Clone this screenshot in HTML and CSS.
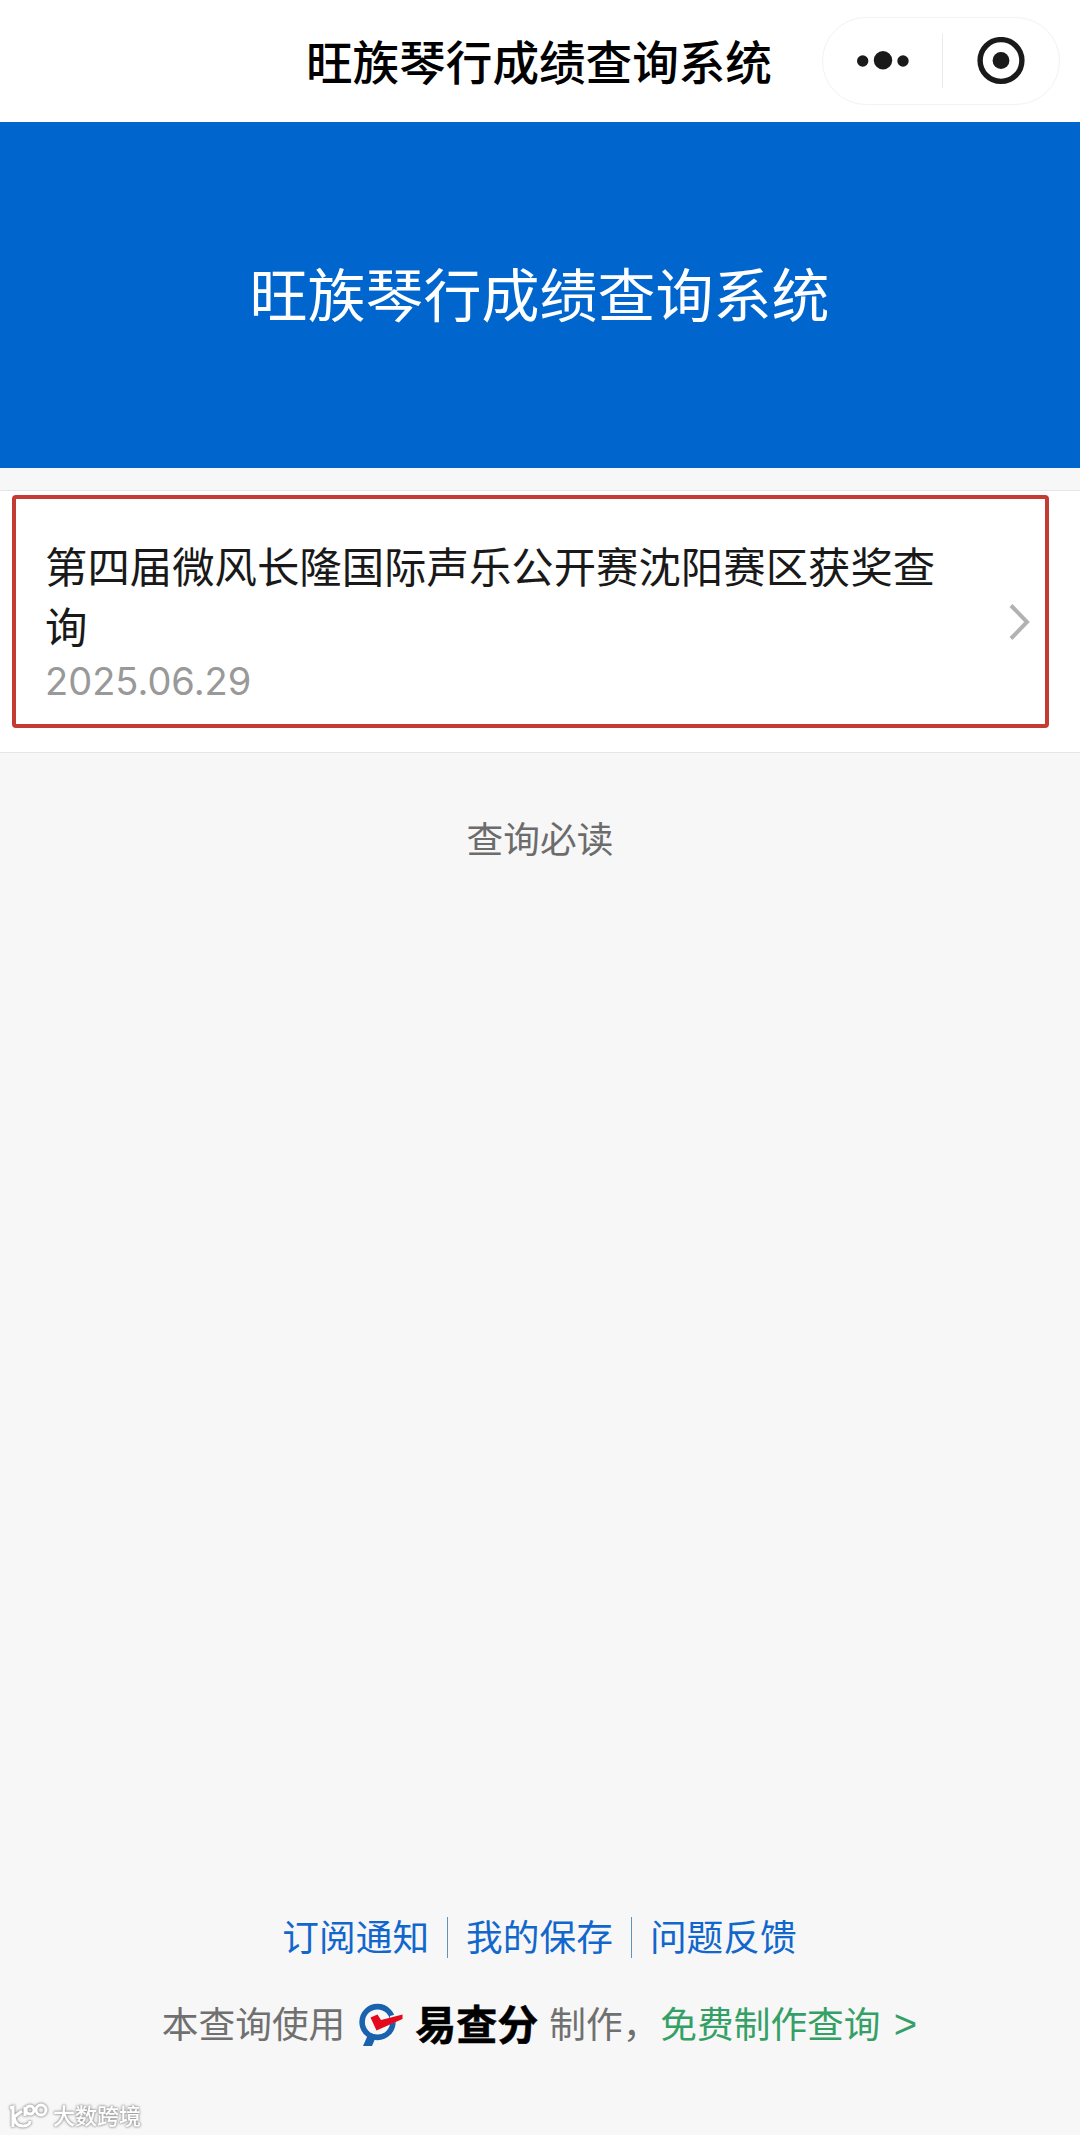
FILE: index.html
```html
<!DOCTYPE html>
<html lang="zh-CN">
<head>
    <meta charset="UTF-8">
    <meta name="viewport" content="width=device-width, initial-scale=1.0">
    <title>旺族琴行成绩查询系统</title>
    <link rel="stylesheet" href="styles.css">
</head>
<body>
    <header class="navbar">
        <h1>旺族琴行成绩查询系统</h1>
        <div class="capsule">
            <svg class="more" width="52" height="20" viewBox="0 0 52 20" fill="#1a1a1a">
                <circle cx="5.7" cy="10" r="5.7"/>
                <circle cx="26" cy="9.2" r="9.2"/>
                <circle cx="46" cy="10" r="5.7"/>
            </svg>
            <span class="capsule-line"></span>
            <svg class="close" width="48" height="48" viewBox="0 0 48 48">
                <circle cx="24" cy="23.5" r="20.9" fill="none" stroke="#1a1a1a" stroke-width="5.4"/>
                <circle cx="24" cy="23.5" r="8.4" fill="#1a1a1a"/>
            </svg>
        </div>
    </header>

    <div class="banner">旺族琴行成绩查询系统</div>

    <div class="list">
        <a class="item">
            <div class="item-text">
                <div class="item-title">第四届微风长隆国际声乐公开赛沈阳赛区获奖查询</div>
                <div class="item-date">2025.06.29</div>
            </div>
            <svg class="arrow" width="22" height="38" viewBox="0 0 22 38">
                <path d="M2 2.5L18 19L2 35.5" fill="none" stroke="#b2b2b2" stroke-width="4"/>
            </svg>
        </a>
    </div>

    <div class="notice">查询必读</div>

    <footer class="footer">
        <nav class="links">
            <a>订阅通知</a>
            <a>我的保存</a>
            <a>问题反馈</a>
        </nav>
        <div class="powered">
            <span>本查询使用</span>
            <svg class="logo" width="44" height="44" viewBox="0 0 44 44">
                <path d="M7 30L16 36L13 43L4 43L8 34Z" fill="#1b62ae"/>
                <circle cx="18.5" cy="19" r="15.4" fill="none" stroke="#1b62ae" stroke-width="5.6"/>
                <path d="M31 13L45 9V16L31 21Z" fill="#f7f7f7"/>
                <path d="M11.5 14.5L18.5 11.5L22 17L43.5 11.5V16L17.5 27.5Z" fill="#e20a1c"/>
            </svg>
            <b class="brand">易查分</b>
            <span>制作，</span>
            <a class="make">免费制作查询 <span class="gt">&gt;</span></a>
        </div>
    </footer>

    <div class="watermark">
        <svg width="40" height="27" viewBox="0 0 40 27" fill="none" stroke="#fff" stroke-width="3">
            <path d="M2 5l3-1v20M14 8L6 14c1 7 5 9 9 9s7-2 7-5"/>
            <circle cx="22" cy="7" r="4"/>
            <circle cx="33" cy="7" r="5"/>
            <path d="M17 4v9"/>
        </svg>
        <span>大数跨境</span>
    </div>
</body>
</html>
```
FILE: styles.css
```css
* {
    box-sizing: border-box;
}
body {
    margin: 0;
    min-height: 2135px;
    display: flex;
    flex-direction: column;
    background: #f7f7f7;
    color: #191919;
    font-family: Inter, "Noto Sans CJK SC", sans-serif;
}
.navbar {
    position: relative;
    height: 122px;
    display: flex;
    align-items: center;
    justify-content: center;
    padding: 0 2px 2px 0;
    background: #fff;
}
h1 {
    margin: 0;
    font-family: "Noto Sans CJK SC", sans-serif;
    font-size: 46.6px;
    font-weight: 500;
    line-height: 60px;
    color: #000;
}
.capsule {
    position: absolute;
    top: 17px;
    right: 20px;
    width: 238px;
    height: 88px;
    display: flex;
    align-items: center;
    justify-content: space-between;
    padding: 0 34px;
    border: 1px solid #f2f2f2;
    border-radius: 44px;
}
.capsule-line {
    width: 1px;
    height: 54px;
    margin-left: -2px;
    background: #ebebeb;
}
.banner {
    height: 346px;
    display: flex;
    align-items: center;
    justify-content: center;
    padding: 0 1px 6px 0;
    background: #0066ce;
    color: #fff;
    font-family: "Noto Sans CJK SC", sans-serif;
    font-size: 58px;
}
.list {
    height: 263px;
    margin-top: 22px;
    padding: 4px 31px 0 12px;
    background: #fff;
    border-top: 1px solid #e5e5e5;
    border-bottom: 1px solid #e5e5e5;
}
.item {
    height: 233px;
    display: flex;
    align-items: center;
    justify-content: space-between;
    padding: 0 14px 0 29px;
    border: 4px solid #c43b33;
    border-radius: 4px;
}
.item-text {
    width: 900px;
    padding-top: 15px;
}
.item-title {
    font-family: "Noto Sans CJK SC", sans-serif;
    font-size: 42.4px;
    line-height: 60.5px;
}
.item-date {
    padding-top: 2px;
    font-size: 38px;
    line-height: 46px;
    color: #999;
}
.arrow {
    margin-top: 21px;
}
.notice {
    margin-top: 60px;
    text-align: center;
    font-size: 36.7px;
    line-height: 54px;
    color: #6c6c6c;
}
.footer {
    margin-top: auto;
    padding-bottom: 82px;
    font-size: 36.7px;
}
.links {
    display: flex;
    justify-content: center;
    padding-right: 1px;
    color: #1267cc;
}
.links a {
    padding: 0 18px;
    line-height: 41px;
}
.links a + a {
    border-left: 1px solid #5f94bd;
}
.powered {
    display: flex;
    align-items: center;
    justify-content: center;
    margin-top: 38px;
    padding-right: 1px;
    line-height: 56px;
    color: #707070;
}
.logo {
    margin: 0 12px 0 14px;
}
.brand {
    margin-right: 11px;
    font-size: 41px;
    font-weight: 700;
    -webkit-text-stroke: 0.6px #000;
    color: #000;
}
.make {
    margin-left: 1px;
    color: #35a065;
}
.gt {
    margin-left: 3px;
    font-family: "Liberation Sans", sans-serif;
    font-size: 40px;
}
.watermark {
    position: absolute;
    left: 8px;
    bottom: 4px;
    display: flex;
    align-items: center;
    gap: 5px;
    font-size: 22px;
    font-weight: 500;
    line-height: 30px;
    color: #fff;
    filter: drop-shadow(0 0 1px #999) drop-shadow(0 0 1px #aaa);
}
```
